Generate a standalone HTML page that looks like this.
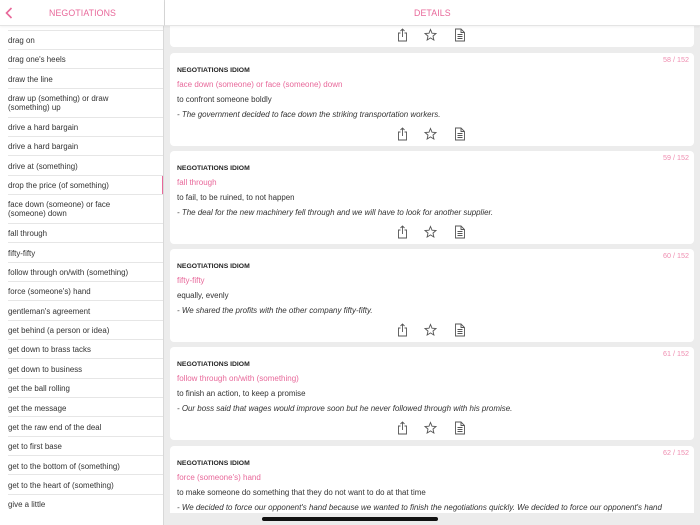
<!DOCTYPE html>
<html><head><meta charset="utf-8"><style>
*{margin:0;padding:0;box-sizing:border-box}
body{width:700px;height:525px;overflow:hidden;background:#ececec;font-family:"Liberation Sans",sans-serif;position:relative;color:#333}
.side{position:absolute;left:0;top:0;width:164px;height:525px;background:#fff;border-right:1px solid #d8d8d8;overflow:hidden}
.hdr{position:absolute;left:0;top:0;height:26px;background:#fff;border-bottom:1px solid #e4e4e4;box-shadow:0 1px 2px rgba(0,0,0,.05);z-index:2}
.hdr span{position:absolute;top:8px;font-size:8.8px;color:#e8689a;letter-spacing:.1px}
.list{position:absolute;left:0;top:29.5px;width:164px}
.row{position:relative;height:19.35px;border-top:1px solid #e6e6e6;margin-left:8px;font-size:7.9px;line-height:9px;padding-top:5.5px;color:#333}
.row.d{height:29px;padding-top:5px}
.row.sel:after{content:"";position:absolute;right:0;top:0;width:2.5px;height:19px;background:#e8689a}
.main{position:absolute;left:165px;top:0;width:535px;height:525px}
.card{position:absolute;left:5px;width:524px;height:93px;background:#fff;border-radius:4px}
.cnt{position:absolute;right:5px;top:2px;font-size:7.2px;color:#ef8db0}
.lab{position:absolute;left:7px;top:14px;font-size:6.8px;font-weight:bold;color:#222}
.term{position:absolute;left:7px;top:27px;font-size:8px;color:#e8689a}
.mean{position:absolute;left:7px;top:42px;font-size:7.9px;color:#333}
.ex{position:absolute;left:7px;top:57px;font-size:7.95px;font-style:italic;color:#333;white-space:nowrap}
.ic{position:absolute;top:74px;left:226px}
</style></head><body>
<div class="side">
<div class="list">
<div class="row">drag on</div>
<div class="row">drag one's heels</div>
<div class="row">draw the line</div>
<div class="row d">draw up (something) or draw<br>(something) up</div>
<div class="row">drive a hard bargain</div>
<div class="row">drive a hard bargain</div>
<div class="row">drive at (something)</div>
<div class="row sel">drop the price (of something)</div>
<div class="row d">face down (someone) or face<br>(someone) down</div>
<div class="row">fall through</div>
<div class="row">fifty-fifty</div>
<div class="row">follow through on/with (something)</div>
<div class="row">force (someone's) hand</div>
<div class="row">gentleman's agreement</div>
<div class="row">get behind (a person or idea)</div>
<div class="row">get down to brass tacks</div>
<div class="row">get down to business</div>
<div class="row">get the ball rolling</div>
<div class="row">get the message</div>
<div class="row">get the raw end of the deal</div>
<div class="row">get to first base</div>
<div class="row">get to the bottom of (something)</div>
<div class="row">get to the heart of (something)</div>
<div class="row">give a little</div>
</div>
</div>
<div class="hdr" style="width:165px;border-right:1px solid #d8d8d8"><svg style="position:absolute;left:5px;top:7px" width="8" height="12" viewBox="0 0 8 12"><path d="M6.5 1 L1.5 6 L6.5 11" fill="none" stroke="#e8689a" stroke-width="1.6"/></svg><span style="left:49px">NEGOTIATIONS</span></div>
<div class="hdr" style="left:165px;width:535px"><span style="left:249px">DETAILS</span></div>
<div class="main">
<div class="card" style="top:-46px"><div class="ic" style="top:74px">ICONS</div></div>
<div class="card" style="top:53px"><div class="cnt">58 / 152</div><div class="lab">NEGOTIATIONS IDIOM</div><div class="term">face down (someone) or face (someone) down</div><div class="mean">to confront someone boldly</div><div class="ex">- The government decided to face down the striking transportation workers.</div><div class="ic">ICONS</div></div>
<div class="card" style="top:151px"><div class="cnt">59 / 152</div><div class="lab">NEGOTIATIONS IDIOM</div><div class="term">fall through</div><div class="mean">to fail, to be ruined, to not happen</div><div class="ex">- The deal for the new machinery fell through and we will have to look for another supplier.</div><div class="ic">ICONS</div></div>
<div class="card" style="top:249px"><div class="cnt">60 / 152</div><div class="lab">NEGOTIATIONS IDIOM</div><div class="term">fifty-fifty</div><div class="mean">equally, evenly</div><div class="ex">- We shared the profits with the other company fifty-fifty.</div><div class="ic">ICONS</div></div>
<div class="card" style="top:347px"><div class="cnt">61 / 152</div><div class="lab">NEGOTIATIONS IDIOM</div><div class="term">follow through on/with (something)</div><div class="mean">to finish an action, to keep a promise</div><div class="ex">- Our boss said that wages would improve soon but he never followed through with his promise.</div><div class="ic">ICONS</div></div>
<div class="card" style="top:446px;height:79px;border-radius:4px 4px 0 0"><div class="cnt">62 / 152</div><div class="lab">NEGOTIATIONS IDIOM</div><div class="term">force (someone's) hand</div><div class="mean">to make someone do something that they do not want to do at that time</div><div class="ex">- We decided to force our opponent's hand because we wanted to finish the negotiations quickly. We decided to force our opponent's hand</div></div>
<div style="position:absolute;left:0;top:513px;width:535px;height:12px;background:#ececec"></div>
<div style="position:absolute;left:97px;top:517px;width:176px;height:4px;border-radius:2px;background:#111"></div>
</div>
<script>
var svg='<svg width="80" height="14" viewBox="0 0 80 14" fill="none" stroke="#555" stroke-width="0.9"><path d="M4.5 5 H2.5 V13 H10.5 V5 H8.5 M6.5 9 V1 M4.5 3 L6.5 1 L8.5 3"/><path d="M34.5 1.5 L36 5.2 L40 5.5 L37 8.1 L37.9 12 L34.5 9.9 L31.1 12 L32 8.1 L29 5.5 L33 5.2 Z"/><path d="M59.5 1 H65 L68.5 4.5 V13 H59.5 Z M65 1 V4.5 H68.5 M61.5 6.5 H66.5 M61.5 8.5 H66.5 M61.5 10.5 H66.5"/></svg>';
document.querySelectorAll('.ic').forEach(function(e){e.innerHTML=svg});
</script>
</body></html>
